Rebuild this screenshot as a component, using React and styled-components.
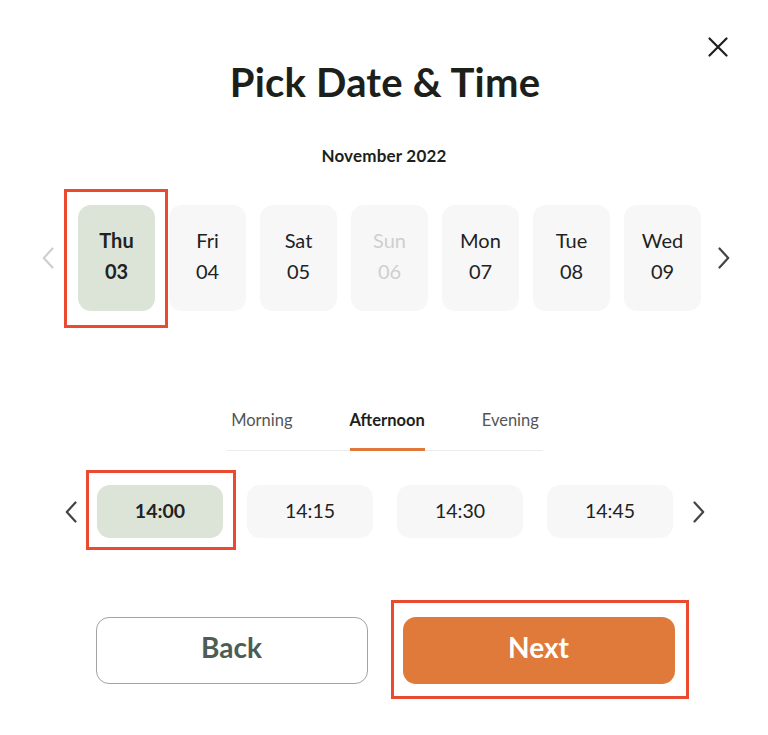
import React, { useState } from 'react'
import styled, { createGlobalStyle } from 'styled-components'

const GlobalStyle = createGlobalStyle`
  html, body {
    margin: 0;
    padding: 0;
    background: #ffffff;
  }
  body {
    font-family: 'Lato', 'Noto Sans', sans-serif;
    color: #1d1f1a;
  }
  * { box-sizing: border-box; }
`;

const Modal = styled.div`
  position: relative;
  width: 768px;
  height: 735px;
  background: #fff;
  padding-top: 58px;
  display: flex;
  flex-direction: column;
  align-items: center;
`;

const CloseBtn = styled.button`
  position: absolute;
  top: 33px;
  right: 36px;
  width: 28px;
  height: 28px;
  padding: 0;
  border: none;
  background: none;
  cursor: pointer;
  display: flex;
  align-items: center;
  justify-content: center;
`;

const Title = styled.h1`
  margin: 0;
  font-size: 40px;
  font-weight: 700;
  line-height: 48px;
  letter-spacing: 0.2px;
  color: #1d1f1a;
  transform: translateX(1px);
`;

const Month = styled.div`
  margin-top: 40px;
  font-size: 17px;
  font-weight: 700;
  line-height: 20px;
  letter-spacing: 0.2px;
  color: #1d1f1a;
`;

const Slider = styled.div`
  display: flex;
  align-items: center;
  justify-content: center;
  margin-top: ${({ top }) => top}px;
  transform: translateX(${({ shift }) => shift || 0}px);
`;

const Track = styled.div`
  display: flex;
  gap: ${({ gap }) => gap}px;
`;

const Arrow = styled.button`
  width: 12px;
  height: 24px;
  padding: 0;
  margin: 0 ${({ mr }) => mr || 0}px 0 ${({ ml }) => ml || 0}px;
  border: none;
  background: none;
  cursor: pointer;
  display: flex;
  align-items: center;
  justify-content: center;
  color: ${({ disabled }) => disabled ? '#cfcfcf' : '#444'};
`;

const Highlight = styled.div`
  position: relative;
  &::after {
    content: '';
    position: absolute;
    top: ${({ box }) => -box[0]}px;
    right: ${({ box }) => -box[1]}px;
    bottom: ${({ box }) => -box[2]}px;
    left: ${({ box }) => -box[3]}px;
    border: 3px solid #ea4a2f;
    pointer-events: none;
  }
`;

const DayCard = styled.button`
  width: 77px;
  height: 106px;
  border: none;
  border-radius: 13px;
  background: ${({ selected }) => selected ? '#dce4d8' : '#f7f7f7'};
  color: ${({ off }) => off ? '#cfcfcf' : '#222'};
  font-family: inherit;
  font-size: 20px;
  font-weight: ${({ selected }) => selected ? 700 : 400};
  line-height: 31px;
  display: flex;
  flex-direction: column;
  align-items: center;
  justify-content: center;
  padding: 0 0 4px;
  cursor: pointer;
`;

const Tabs = styled.div`
  margin-top: 99px;
  display: flex;
  gap: 57px;
  width: 316px;
  justify-content: center;
  border-bottom: 1px solid #ececec;
  transform: translateX(1px);
`;

const Tab = styled.button`
  border: none;
  background: none;
  padding: 0 0 18px;
  font-family: inherit;
  font-size: 16.5px;
  line-height: 20px;
  font-weight: ${({ active }) => active ? 700 : 400};
  color: ${({ active }) => active ? '#1d1f1a' : '#555'};
  border-bottom: 3px solid ${({ active }) => active ? '#e07a3a' : 'transparent'};
  margin-bottom: -1px;
  cursor: pointer;
`;

const SlotCard = styled.button`
  width: 126px;
  height: 53px;
  border: none;
  border-radius: 13px;
  background: ${({ selected }) => selected ? '#dce4d8' : '#f7f7f7'};
  color: #222;
  font-family: inherit;
  font-size: 19.5px;
  font-weight: ${({ selected }) => selected ? 700 : 400};
  padding: 0 0 3px;
  cursor: pointer;
`;

const Actions = styled.div`
  margin-top: 79px;
  display: flex;
  gap: 35px;
  transform: translateX(1px);
`;

const ActionBtn = styled.button`
  width: 272px;
  height: 67px;
  border-radius: 13px;
  border: ${({ primary }) => primary ? 'none' : '1px solid #a3a3a3'};
  background: ${({ primary }) => primary ? '#e07a3a' : '#fff'};
  color: ${({ primary }) => primary ? '#fff' : '#4b5e53'};
  font-family: inherit;
  font-size: 28px;
  font-weight: 700;
  padding: 0 0 8px;
  cursor: pointer;
`;

const Chevron = ({ dir }) => (
  <svg width="12" height="22" viewBox="0 0 12 22" fill="none">
    <path
      d={dir === 'left' ? 'M10.5 1.5 L1.8 11 L10.5 20.5' : 'M1.5 1.5 L10.2 11 L1.5 20.5'}
      stroke="currentColor"
      strokeWidth="2.2"
      strokeLinecap="round"
      strokeLinejoin="round"
    />
  </svg>
)

const days = [
  { name: 'Thu', num: '03' },
  { name: 'Fri', num: '04' },
  { name: 'Sat', num: '05' },
  { name: 'Sun', num: '06', off: true },
  { name: 'Mon', num: '07' },
  { name: 'Tue', num: '08' },
  { name: 'Wed', num: '09' },
]

const slots = ['14:00', '14:15', '14:30', '14:45']
const tabs = ['Morning', 'Afternoon', 'Evening']

export default function App() {
  const [day, setDay] = useState(0)
  const [tab, setTab] = useState(1)
  const [slot, setSlot] = useState(0)

  return (
    <>
      <GlobalStyle />
      <Modal>
        <CloseBtn aria-label="Close">
          <svg width="20" height="20" viewBox="0 0 20 20">
            <path d="M1.5 1.5 L18.5 18.5 M18.5 1.5 L1.5 18.5" stroke="#1d1f1a" strokeWidth="2.2" strokeLinecap="round" />
          </svg>
        </CloseBtn>

        <Title>Pick Date &amp; Time</Title>
        <Month>November 2022</Month>

        <Slider top={39} shift={2}>
          <Arrow disabled mr={24}><Chevron dir="left" /></Arrow>
          <Track gap={14}>
            {days.map((d, i) => {
              const card = (
                <DayCard key={d.name} selected={i === day} off={d.off} onClick={() => !d.off && setDay(i)}>
                  <span>{d.name}</span>
                  <span>{d.num}</span>
                </DayCard>
              )
              return i === day
                ? <Highlight key={d.name} box={[16, 13, 17, 14]}>{card}</Highlight>
                : card
            })}
          </Track>
          <Arrow ml={17}><Chevron dir="right" /></Arrow>
        </Slider>

        <Tabs>
          {tabs.map((t, i) => (
            <Tab key={t} active={i === tab} onClick={() => setTab(i)}>{t}</Tab>
          ))}
        </Tabs>

        <Slider top={34} shift={1}>
          <Arrow mr={20}><Chevron dir="left" /></Arrow>
          <Track gap={24}>
            {slots.map((s, i) => {
              const card = (
                <SlotCard key={s} selected={i === slot} onClick={() => setSlot(i)}>{s}</SlotCard>
              )
              return i === slot
                ? <Highlight key={s} box={[15, 13, 12, 11]}>{card}</Highlight>
                : card
            })}
          </Track>
          <Arrow ml={20}><Chevron dir="right" /></Arrow>
        </Slider>

        <Actions>
          <ActionBtn>Back</ActionBtn>
          <Highlight box={[17, 14, 15, 12]}>
            <ActionBtn primary>Next</ActionBtn>
          </Highlight>
        </Actions>
      </Modal>
    </>
  )
}
